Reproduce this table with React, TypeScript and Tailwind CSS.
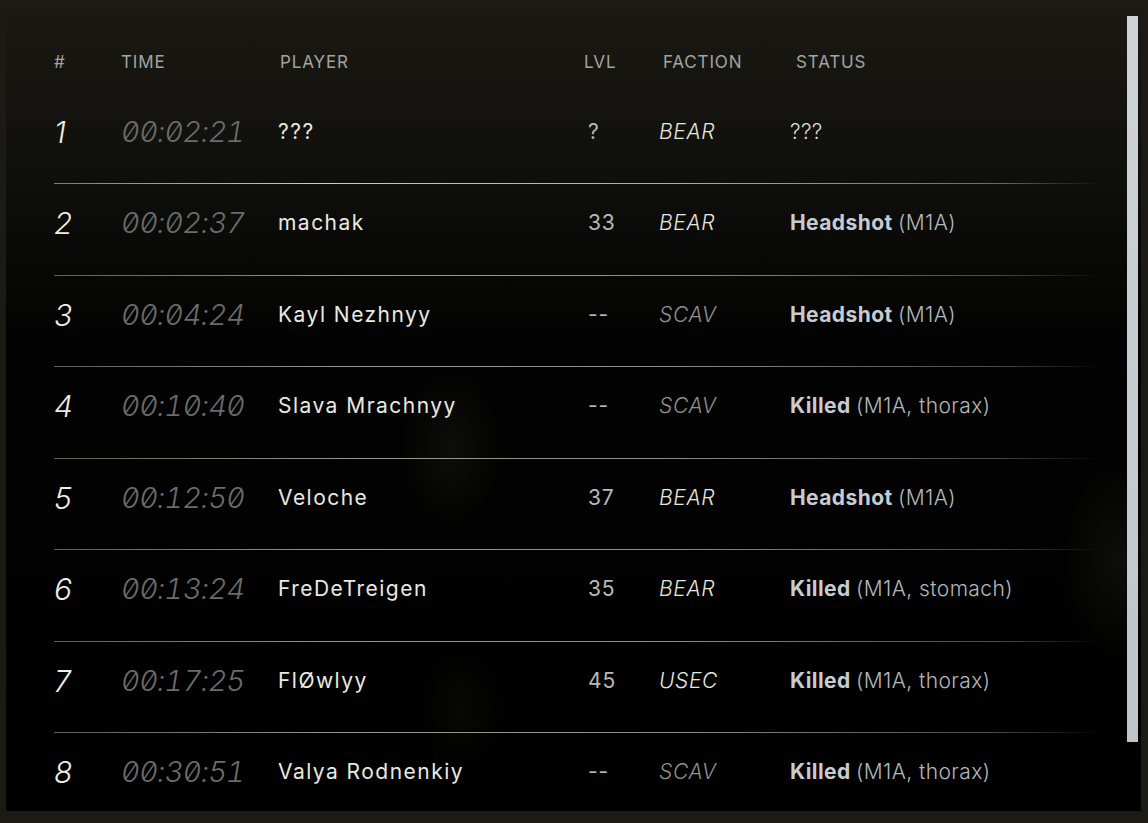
import React from "react";

type Row = {
  n: string;
  time: string;
  player: string;
  lvl: string;
  faction: string;
  status: string;
  detail: string;
};

const rows: Row[] = [
  { n: "1", time: "00:02:21", player: "???", lvl: "?", faction: "BEAR", status: "", detail: "???" },
  { n: "2", time: "00:02:37", player: "machak", lvl: "33", faction: "BEAR", status: "Headshot", detail: "(M1A)" },
  { n: "3", time: "00:04:24", player: "Kayl Nezhnyy", lvl: "--", faction: "SCAV", status: "Headshot", detail: "(M1A)" },
  { n: "4", time: "00:10:40", player: "Slava Mrachnyy", lvl: "--", faction: "SCAV", status: "Killed", detail: "(M1A, thorax)" },
  { n: "5", time: "00:12:50", player: "Veloche", lvl: "37", faction: "BEAR", status: "Headshot", detail: "(M1A)" },
  { n: "6", time: "00:13:24", player: "FreDeTreigen", lvl: "35", faction: "BEAR", status: "Killed", detail: "(M1A, stomach)" },
  { n: "7", time: "00:17:25", player: "FlØwlyy", lvl: "45", faction: "USEC", status: "Killed", detail: "(M1A, thorax)" },
  { n: "8", time: "00:30:51", player: "Valya Rodnenkiy", lvl: "--", faction: "SCAV", status: "Killed", detail: "(M1A, thorax)" },
];

const grid = "grid grid-cols-[67px_157px_306px_75px_131px_1fr] items-center";

export default function App() {
  return (
    <div
      className="w-[1148px] h-[823px] overflow-hidden bg-[#1b1a15] pt-[10px] pl-[6px]"
      style={{ fontFamily: "Inter, 'Open Sans', 'Liberation Sans', sans-serif" }}
    >
      <div className="relative w-[1135px] h-[801px] overflow-hidden bg-[linear-gradient(180deg,#1a1913_0%,#0f0f0c_20%,#030303_40%,#000000_100%)] flex">
        {/* soft background blobs */}
        <div className="absolute left-[395px] top-[360px] w-[100px] h-[160px] rounded-full bg-[radial-gradient(closest-side,rgba(90,88,70,0.13),transparent)]" />
        <div className="absolute left-[1055px] top-[450px] w-[110px] h-[200px] rounded-full bg-[radial-gradient(closest-side,rgba(90,88,70,0.13),transparent)]" />
        <div className="absolute left-[410px] top-[640px] w-[90px] h-[120px] rounded-full bg-[radial-gradient(closest-side,rgba(90,88,70,0.08),transparent)]" />

        <div className="relative flex-1 pl-[48px]">
          <div className="w-[1046px]">
            {/* header */}
            <div className={`${grid} h-[82.5px] pt-[42px] items-start text-[17px] leading-[20px] tracking-[0.05em] text-[#a3a3a0]`}>
              <div>#</div>
              <div>TIME</div>
              <div className="pl-[2px]">PLAYER</div>
              <div>LVL</div>
              <div className="pl-[4px]">FACTION</div>
              <div className="pl-[6px]">STATUS</div>
            </div>

            {rows.map((r, i) => (
              <div key={r.n} className="h-[91.5px] flex flex-col">
                <div className={`${grid} pt-[24px] h-[54px]`}>
                  <div className="text-[30px] leading-[30px] italic font-light text-[#eeeee2]">{r.n}</div>
                  <div className="text-[29px] leading-[30px] italic font-light text-[#6c6c6a] slashed-zero tabular-nums tracking-[-0.02em]">
                    {r.time}
                  </div>
                  <div className="text-[21px] leading-[30px] tracking-[0.07em] text-[#e9e9e1]">{r.player}</div>
                  <div className="pl-[4px] text-[21px] leading-[30px] tracking-[0.04em] text-[#b9b9b6]">{r.lvl}</div>
                  <div
                    className={`text-[21px] leading-[30px] italic font-light tracking-[0.03em] ${
                      r.faction === "SCAV" ? "text-[#8f8f8c]" : "text-[#e6e6de]"
                    }`}
                  >
                    {r.faction}
                  </div>
                  <div className="text-[21px] leading-[30px] tracking-[0.02em]">
                    {r.status && <span className="font-bold text-[#c7ccd0]">{r.status} </span>}
                    <span className={r.status ? "font-light text-[#b3b8bc]" : "font-light text-[#deded8]"}>{r.detail}</span>
                  </div>
                </div>
                <div className="mt-auto h-px w-full">
                  {i < rows.length - 1 && (
                    <div
                      className={`h-px w-full ${
                        i === 0
                          ? "bg-[linear-gradient(90deg,#7d7d78_0%,#c8ccd0_25%,#a8acae_60%,#6a6a66_90%,transparent_100%)]"
                          : "bg-[linear-gradient(90deg,#5f5f5a_0%,#9a9a96_30%,#8a8a86_60%,#4a4a46_90%,transparent_100%)]"
                      }`}
                    />
                  )}
                </div>
              </div>
            ))}
          </div>
        </div>

        {/* scrollbar */}
        <div className="relative w-[11px] mr-[3px] pt-[6px]">
          <div className="w-[11px] h-[726px] bg-[linear-gradient(180deg,#cfd3d5,#bec4c9)]" />
        </div>
      </div>
    </div>
  );
}
